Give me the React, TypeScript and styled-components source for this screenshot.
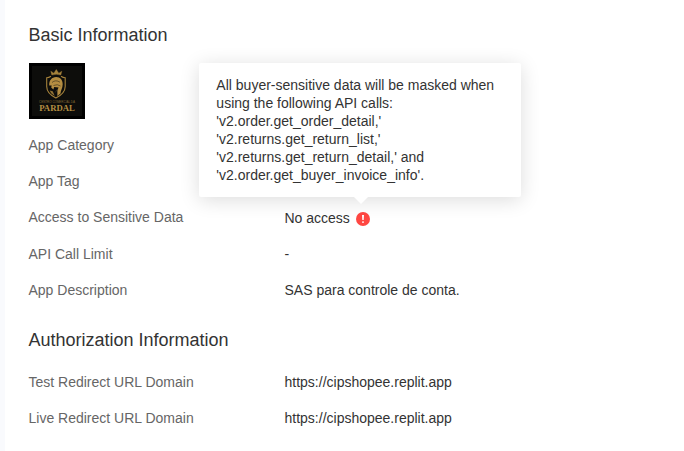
import React from 'react';
import styled, { createGlobalStyle } from 'styled-components';

const GlobalStyle = createGlobalStyle`
  * { box-sizing: border-box; }
  body {
    margin: 0;
    background: #fff;
    overflow: hidden;
    font-family: "Liberation Sans", Arial, sans-serif;
    font-size: 14px;
    color: #333;
  }
`;

const Page = styled.main`
  min-height: 451px;
  border-left: 5px solid #f9fafd;
  padding: 22px 24px 0 23.5px;
`;

const Section = styled.section`
  & + & { margin-top: 27px; }
`;

const Heading = styled.h2<{ $gap: number }>`
  margin: 0 0 ${(p) => p.$gap}px;
  font-size: 18px;
  line-height: 26px;
  font-weight: 400;
`;

const Logo = styled.svg`
  display: block;
  width: 56px;
  height: 56px;
  margin: 0 0 16px 0.5px;
`;

const Fields = styled.dl`
  display: grid;
  gap: 16px;
  margin: 0;
`;

const Field = styled.div<{ $tall?: boolean }>`
  display: grid;
  grid-template-columns: 256px 1fr;
  height: ${(p) => (p.$tall ? 21 : 20)}px;
  line-height: 20px;
`;

const Label = styled.dt`
  color: #666;
`;

const Value = styled.dd<{ $tall?: boolean }>`
  display: flex;
  align-items: center;
  margin: ${(p) => (p.$tall ? '1px 0 0' : '0')};
`;

const Hint = styled.span`
  position: relative;
  display: flex;
  margin: 2px 0 0 6.5px;
`;

const HintIcon = styled.svg`
  width: 14px;
  height: 14px;
`;

const Tooltip = styled.div`
  position: absolute;
  left: -157px;
  bottom: 29px;
  width: 322px;
  padding: 13px 17px;
  border-radius: 2px;
  background: #fff;
  line-height: 18px;
  box-shadow: 0 3px 20px rgba(0, 0, 0, 0.14);

  &::after {
    content: '';
    position: absolute;
    top: 100%;
    left: 155px;
    border: solid transparent;
    border-width: 7px 7px 0;
    border-top-color: #fff;
  }
`;

function AppLogo() {
  return (
    <Logo viewBox="0 0 56 56" aria-label="Pardal">
      <rect width="56" height="56" fill="#000" />
      <rect x="3" y="3" width="50" height="50" fill="#0d0d0b" />
      <g fill="none" stroke="#a5823b" strokeWidth="1.1">
        <path d="M22.8 12 21.8 8.2l3 2L27.3 6.5l2.5 3.7 3-2-1 3.8Q27.3 10.6 22.8 12Z" fill="#a5823b" strokeWidth=".4" />
        <path d="M22 13.2Q19.8 14.6 17.7 14.7V23.5c0 5.2 3.8 8.8 9.2 11.5C32.3 32.3 36.2 28.7 36.2 23.5v-8.8q-2.1-.1-4.2-1.5" />
      </g>
      <path d="M20.2 22.5c-.2-5 2.5-8.5 7-8.5 4.2 0 6.6 3.2 6.5 7.2 0 4-2.2 6.4-2.2 9.3l-3.2 2.5c.5-3.5-.7-5.4 1.3-8.6l-4.4-.5-.8 2.5-2.2-1.8.5-2.1Z" fill="#b48d41" />
      <path d="M20.7 27.5l3 .8 2 4.5c-2.2-1.1-4.1-2.8-5-5.3Z" fill="#8f7033" />
      <path d="M23 19.5q3.5-3.2 8-.3M24.5 22.5q4-1.8 7 .5M28.2 26.5l-2 3" fill="none" stroke="#443820" strokeWidth=".7" />
      <text x="10" y="40.3" textLength="36" lengthAdjust="spacingAndGlyphs" fill="#806633" fontFamily="Liberation Sans, sans-serif" fontSize="3">CENTRO COMERCIAL DA</text>
      <text x="10.2" y="48.2" textLength="35.6" lengthAdjust="spacingAndGlyphs" fill="#b48d42" fontFamily="Liberation Serif, serif" fontSize="9.2" fontWeight="700">PARDAL</text>
    </Logo>
  );
}

export default function App() {
  return (
    <>
      <GlobalStyle />
      <Page>
        <Section>
          <Heading $gap={15}>Basic Information</Heading>
          <AppLogo />
          <Fields>
            <Field><Label>App Category</Label></Field>
            <Field><Label>App Tag</Label></Field>
            <Field $tall>
              <Label>Access to Sensitive Data</Label>
              <Value $tall>
                No access
                <Hint>
                  <HintIcon viewBox="0 0 14 14">
                    <circle cx="7" cy="7" r="7" fill="#ff4742" />
                    <path d="M6 3h2l-.3 5H6.3Z" fill="#fff" />
                    <circle cx="7" cy="10.1" r=".95" fill="#fff" />
                  </HintIcon>
                  <Tooltip role="tooltip">
                    All buyer-sensitive data will be masked when using the following API calls: 'v2.order.get_order_detail,' 'v2.returns.get_return_list,' 'v2.returns.get_return_detail,' and 'v2.order.get_buyer_invoice_info'.
                  </Tooltip>
                </Hint>
              </Value>
            </Field>
            <Field><Label>API Call Limit</Label><Value>-</Value></Field>
            <Field><Label>App Description</Label><Value>SAS para controle de conta.</Value></Field>
          </Fields>
        </Section>
        <Section>
          <Heading $gap={19}>Authorization Information</Heading>
          <Fields>
            <Field><Label>Test Redirect URL Domain</Label><Value>https://cipshopee.replit.app</Value></Field>
            <Field><Label>Live Redirect URL Domain</Label><Value>https://cipshopee.replit.app</Value></Field>
          </Fields>
        </Section>
      </Page>
    </>
  );
}
